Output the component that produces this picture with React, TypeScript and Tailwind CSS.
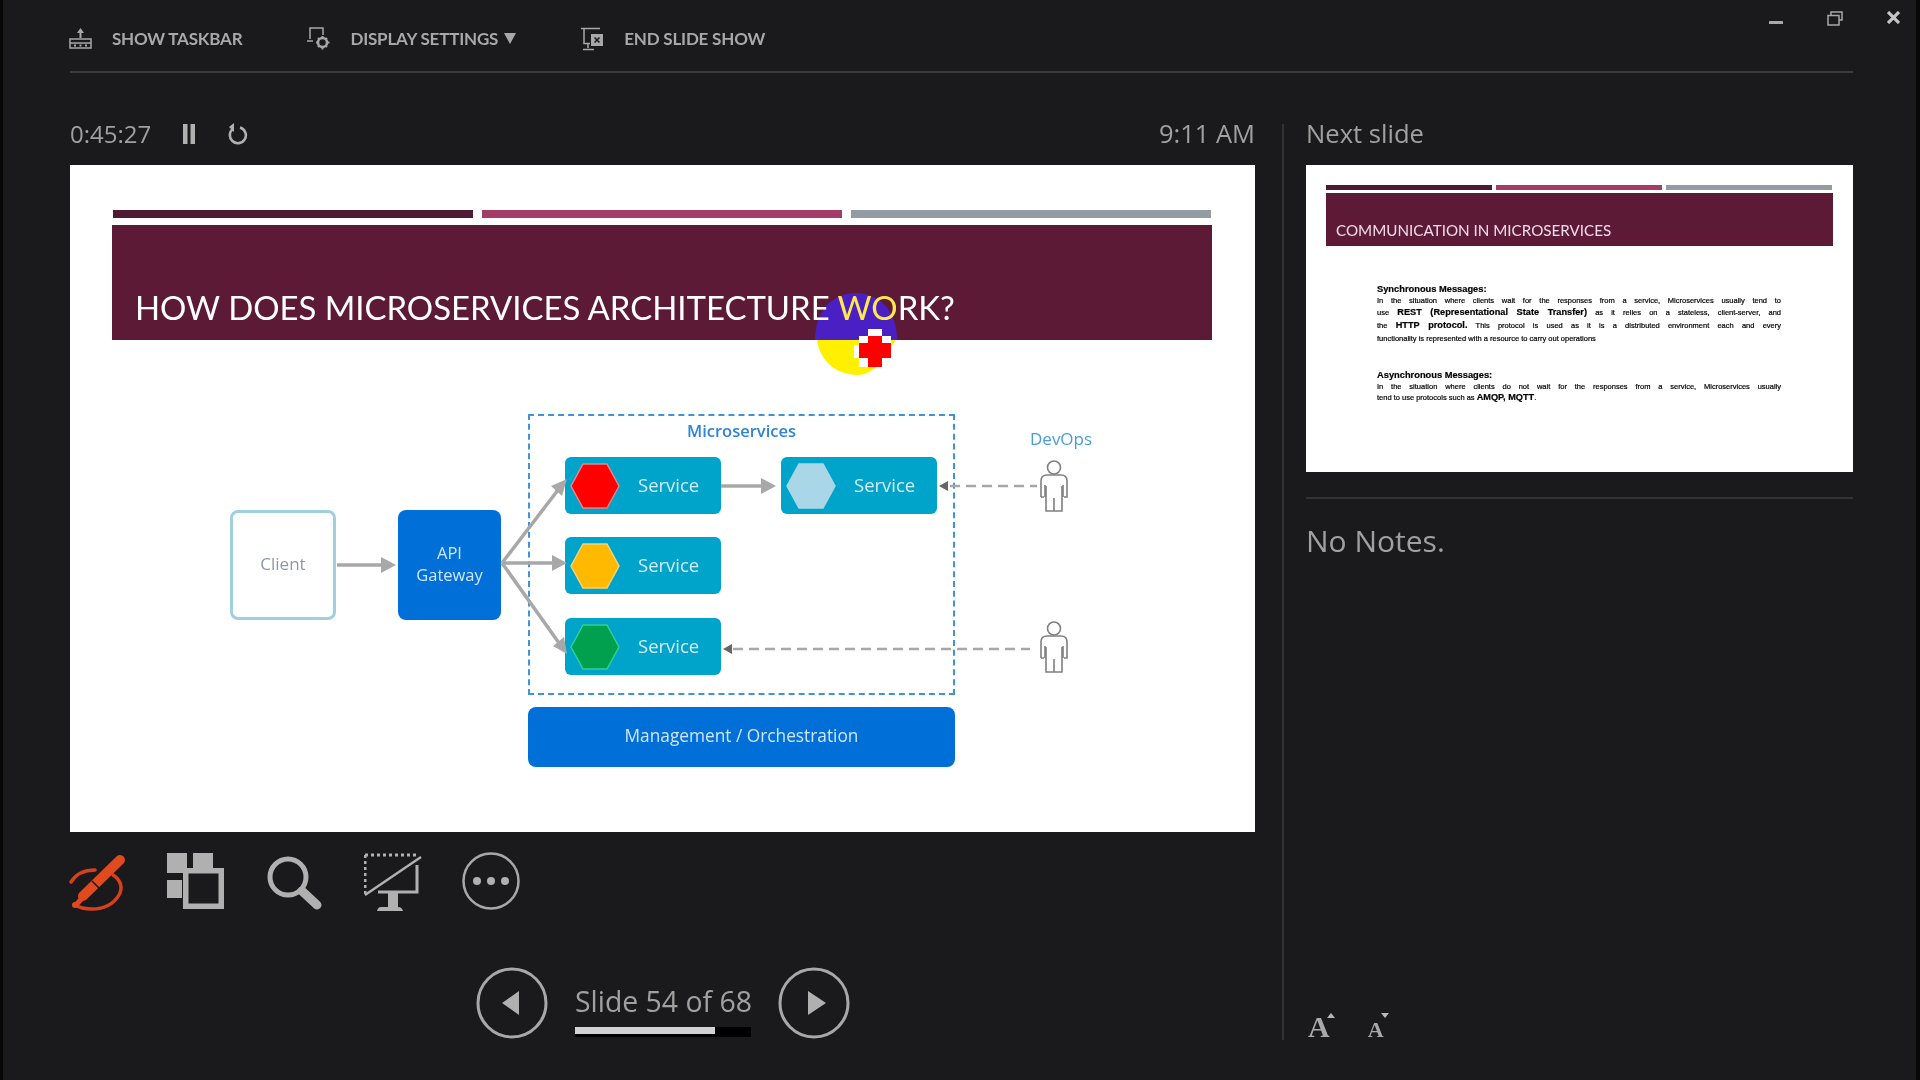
import React from "react";

const uiFont = "font-['Open_Sans','Liberation_Sans',sans-serif]";

const Hexagon = ({ fill, stroke }: { fill: string; stroke: string }) => (
	<svg width="50" height="46" viewBox="0 0 50 46" className="absolute left-[5px] top-[6px]">
		<polygon points="1,23 13,1 37,1 49,23 37,45 13,45" fill={fill} stroke={stroke} strokeWidth="1.5" />
	</svg>
);

const Person = ({ className }: { className: string }) => (
	<svg width="28" height="52" viewBox="0 0 28 52" fill="none" stroke="#808080" strokeWidth="1.6" className={className}>
		<circle cx="14" cy="7.5" r="6.5" fill="#fff" />
		<path d="M1 37V21q0-6 6-6h14q6 0 6 6v16h-3M1 37h3" />
		<path d="M5 25v12M23 25v12M6 37v14h16V37M14 38v13M6 26v11M22 26v11" />
	</svg>
);

const Service = ({ className, fill, stroke }: { className: string; fill: string; stroke: string }) => (
	<div className={`absolute w-[156px] h-[57px] rounded-[6px] bg-[#00a3c9] ${className}`}>
		<Hexagon fill={fill} stroke={stroke} />
		<span className="absolute left-[73px] top-[15px] text-[18.5px] leading-[26px] font-['Open_Sans',sans-serif] text-[#d3ecf4]">
			Service
		</span>
	</div>
);

const MainSlide = () => (
	<div className="relative w-[1185px] h-[667px] bg-white overflow-hidden">
		<div className="flex gap-[9px] pl-[43px] pr-[43px] pt-[45px]">
			<div className="w-[360px] h-[8px] bg-[#4e1a33]" />
			<div className="w-[360px] h-[8px] bg-[#a33d68]" />
			<div className="w-[360px] h-[8px] bg-[#949ca3]" />
		</div>
		<div className="mx-[42px] mt-[7px] w-[1100px] h-[115px] bg-[#5c1a36]" />

		{/* cursor highlight sits under the title text */}
		<svg width="90" height="90" viewBox="0 0 90 90" className="absolute left-[744px] top-[125px]">
			<path d="M1 50C1 22 18 3 42 3s41 19 41 47z" fill="#4a20c4" />
			<path d="M3 50C6 70 21 85 44 85C56 85 66 75 71 65L82 50z" fill="#ffef00" />
		</svg>
		<div className="absolute left-[65px] top-[120px] text-[32.9px] leading-[46px] whitespace-nowrap font-['Lato',sans-serif] text-white">
			HOW DOES MICROSERVICES ARCHITECTURE <span className="text-[#ffe94a]">WO</span>RK?
		</div>
		<svg width="38" height="40" viewBox="0 0 38 40" className="absolute left-[784px] top-[164px]" shapeRendering="crispEdges">
			<path d="M14 0h14v7h9v31H5V29H0V16h5V7h9z" fill="#fff" />
			<path d="M14 7h14v7h9v15h-9v9H14v-9H5V14h9z" fill="#ff0000" />
		</svg>

		{/* diagram */}
		<div className="absolute left-[160px] top-[345px] w-[106px] h-[110px] pb-[2px] rounded-[8px] border-[3px] border-[#9fd0e0] flex items-center justify-center text-[17px] font-['Open_Sans',sans-serif] text-[#8a9ba3]">
			Client
		</div>
		<div className="absolute left-[328px] top-[345px] w-[103px] h-[110px] pb-[2px] rounded-[8px] bg-[#0070d8] flex items-center justify-center text-center text-[16.5px] leading-[22px] font-['Open_Sans',sans-serif] text-[#cfe6fa]">
			API
			<br />
			Gateway
		</div>
		<div className="absolute left-[458px] top-[249px] w-[427px] h-[281px] border-2 border-dashed border-[#3f93d9]" />
		<div className="absolute left-[458px] top-[254px] w-[427px] text-center text-[16.5px] leading-[24px] font-semibold font-['Open_Sans',sans-serif] text-[#2f84d6]">
			Microservices
		</div>
		<Service className="left-[495px] top-[292px]" fill="#ff0000" stroke="#e8858a" />
		<Service className="left-[495px] top-[372px]" fill="#ffb900" stroke="#f3d27a" />
		<Service className="left-[495px] top-[453px]" fill="#00a04f" stroke="#2fcf9a" />
		<Service className="left-[711px] top-[292px]" fill="#a9d7e8" stroke="#a9d7e8" />
		<div className="absolute left-[458px] top-[542px] w-[427px] h-[60px] pb-[2px] rounded-[8px] bg-[#0070d8] flex items-center justify-center text-[17.3px] font-['Open_Sans',sans-serif] text-[#cfe6fa]">
			Management / Orchestration
		</div>
		<div className="absolute left-[960px] top-[262px] text-[17px] leading-[24px] font-['Open_Sans',sans-serif] text-[#4b9be0]">
			DevOps
		</div>
		<Person className="absolute left-[970px] top-[295px]" />
		<Person className="absolute left-[970px] top-[456px]" />

		<svg width="1185" height="667" viewBox="0 0 1185 667" fill="none" className="absolute left-0 top-0 pointer-events-none">
			<g stroke="#a8a8a8" strokeWidth="3.5">
				<path d="M267 400h46" />
				<path d="M651 321h44" />
				<path d="M432 398L488 325" />
				<path d="M432 398h54" />
				<path d="M432 398L489 478" />
			</g>
			<g fill="#a8a8a8">
				<polygon points="326,400 311,392 311,408" />
				<polygon points="706,321 691,313 691,329" />
				<polygon points="497,314 481,321 492,331" />
				<polygon points="497,398 482,390 482,406" />
				<polygon points="497,489 494,472 483,481" />
			</g>
			<g stroke="#aaa6a6" strokeWidth="2.5" strokeDasharray="10 6">
				<path d="M880 321h87" />
				<path d="M663 484h297" />
			</g>
			<g fill="#666">
				<polygon points="869,321 878,316 878,326" />
				<polygon points="653,484 662,479 662,489" />
			</g>
		</svg>
	</div>
);

const lineClass = "text-justify [text-align-last:justify] whitespace-nowrap";

const NextSlide = () => (
	<div className="w-[547px] h-[307px] bg-white pt-[20px] px-[20px]">
		<div className="flex gap-[4px]">
			<div className="w-[166px] h-[5px] bg-[#4e1a33]" />
			<div className="w-[166px] h-[5px] bg-[#a33d68]" />
			<div className="w-[166px] h-[5px] bg-[#949ca3]" />
		</div>
		<div className="mt-[3px] h-[53px] w-[507px] bg-[#5c1a36] pl-[10px] pt-[27px] text-[15.2px] leading-[21px] font-['Lato',sans-serif] text-[#f2dde6]">
			COMMUNICATION IN MICROSERVICES
		</div>
		<div className="ml-[51px] w-[404px] mt-[37px] text-[7.5px] text-black [-webkit-text-stroke:0.2px_black] blur-[0.3px] font-['Liberation_Sans',sans-serif]">
			<div className="font-bold text-[9.3px] leading-[12px]">Synchronous Messages:</div>
			<div className={`${lineClass} leading-[11px]`}>
				In the situation where clients wait for the responses from a service, Microservices usually tend to
			</div>
			<div className={`${lineClass} leading-[12px]`}>
				use <b className="text-[9.2px]">REST (Representational State Transfer)</b> as it relies on a stateless, client-server, and
			</div>
			<div className={`${lineClass} leading-[13px]`}>
				the <b className="text-[9.2px]">HTTP protocol.</b> This protocol is used as it is a distributed environment each and every
			</div>
			<div className="leading-[13px]">functionality is represented with a resource to carry out operations</div>
			<div className="font-bold text-[9.3px] leading-[12px] mt-[24px]">Asynchronous Messages:</div>
			<div className={`${lineClass} leading-[11px]`}>
				In the situation where clients do not wait for the responses from a service, Microservices usually
			</div>
			<div className="leading-[11px]">
				tend to use protocols such as <b className="text-[9.2px]">AMQP, MQTT</b>.
			</div>
		</div>
	</div>
);

const ToolbarItem = ({ icon, label, suffix }: { icon: React.ReactNode; label: string; suffix?: boolean }) => (
	<div className="flex items-center gap-[20px]">
		{icon}
		<span className="flex items-center text-[17px] font-bold tracking-[-0.2px] font-['Lato',sans-serif] text-[#a8a8a8]">
			{label}
			{suffix && (
				<span className="ml-[6px] w-0 h-0 border-x-[6.5px] border-x-transparent border-t-[11px] border-t-[#a8a8a8]" />
			)}
		</span>
	</div>
);

const TaskbarIcon = (
	<svg width="23" height="22" viewBox="0 0 23 22" fill="none" stroke="#a8a8a8" strokeWidth="1.5">
		<rect x="1" y="11" width="21" height="9" />
		<path d="M1 15h21" />
		<path d="M11.5 10V4" strokeWidth="2" />
		<polygon points="11.5,0 8,5 15,5" fill="#a8a8a8" stroke="none" />
		<path d="M5 17.5h2M10.5 17.5h2M16 17.5h2" strokeWidth="2" />
	</svg>
);

const DisplayIcon = (
	<svg width="23" height="23" viewBox="0 0 23 23" fill="none" stroke="#a8a8a8" strokeWidth="1.5">
		<path d="M3 12V1h13v7M0 14h6" />
		<circle cx="15.5" cy="15.5" r="4.5" strokeWidth="2.5" />
		<path d="M15.5 9v2M15.5 20v2.5M9 15.5h2M20 15.5h2.5M11 11l1.5 1.5M18.5 18.5l1.5 1.5M20 11l-1.5 1.5M12.5 18.5L11 20" strokeWidth="2" />
	</svg>
);

const EndShowIcon = (
	<svg width="23" height="24" viewBox="0 0 23 24" fill="none" stroke="#a8a8a8" strokeWidth="1.5">
		<path d="M0 1.5h19M3 1.5v15h6M7 16v5M2 22.5h11" />
		<rect x="10" y="7" width="12" height="12" fill="#a8a8a8" stroke="none" />
		<path d="M13.5 10.5l5 5M18.5 10.5l-5 5" stroke="#1a1a1c" strokeWidth="1.6" />
	</svg>
);

const Header = () => (
	<div className="flex h-[71px]">
		<div className="ml-[69px] flex items-center gap-[65px] pt-[6px]">
			<ToolbarItem icon={TaskbarIcon} label="SHOW TASKBAR" />
			<ToolbarItem icon={DisplayIcon} label="DISPLAY SETTINGS" suffix />
			<ToolbarItem icon={EndShowIcon} label="END SLIDE SHOW" />
		</div>
		<div className="ml-auto mr-[20px] mt-[11px] flex items-start gap-[44px]">
			<div className="mt-[10px] w-[14px] h-[2.5px] bg-[#a8a8a8]" />
			<svg width="16" height="15" viewBox="0 0 16 15" fill="none" stroke="#a8a8a8" strokeWidth="1.5">
				<rect x="1" y="4.5" width="11" height="9.5" />
				<path d="M4 4V1h11v8h-3" />
			</svg>
			<svg width="13" height="13" viewBox="0 0 13 13" stroke="#c4c4c4" strokeWidth="3.2">
				<path d="M1 1l11 11M12 1L1 12" />
			</svg>
		</div>
	</div>
);

const PenIcon = (
	<svg width="58" height="60" viewBox="0 0 58 60" fill="none" className="overflow-visible">
		<path d="M1 30C6 22 14 18 25 18" stroke="#d8401c" strokeWidth="3.5" strokeLinecap="round" />
		<path d="M43 23c8 5 10 13 6 20-6 10-16 14-27 14-6 0-12-1-17-4" stroke="#d8401c" strokeWidth="3.5" strokeLinecap="round" />
		<path d="M13 44L50 8" stroke="#e04a1e" strokeWidth="10" strokeLinecap="round" />
		<path d="M6 53L14 44" stroke="#e04a1e" strokeWidth="5" />
		<circle cx="5" cy="53" r="3" fill="#e04a1e" />
		<path d="M22 29l8 8" stroke="#1a1a1c" strokeWidth="1.6" />
	</svg>
);

const SlidesIcon = (
	<svg width="58" height="60" viewBox="0 0 58 60" fill="none" className="overflow-visible">
		<rect x="-1" y="1" width="20" height="20" fill="#b0b0b0" />
		<rect x="25" y="1" width="20" height="15" fill="#b0b0b0" />
		<rect x="-1" y="28" width="15" height="18" fill="#b0b0b0" />
		<rect x="17.75" y="18.75" width="35.5" height="35.5" fill="#1a1a1c" stroke="#b0b0b0" strokeWidth="5.5" />
	</svg>
);

const SearchIcon = (
	<svg width="58" height="60" viewBox="0 0 58 60" fill="none" stroke="#b0b0b0">
		<circle cx="22" cy="25" r="18" strokeWidth="5" />
		<path d="M36 39l15 14" strokeWidth="9" strokeLinecap="round" />
	</svg>
);

const ScreenOffIcon = (
	<svg width="58" height="60" viewBox="0 0 58 60" fill="none">
		<path d="M1 3h53M1 3v39" stroke="#b0b0b0" strokeWidth="3" strokeDasharray="3 3" />
		<path d="M1 43L57 5" stroke="#b0b0b0" strokeWidth="2.5" />
		<path d="M53 13v27H14" stroke="#b0b0b0" strokeWidth="3" />
		<rect x="24" y="40" width="10" height="15" fill="#b0b0b0" />
		<path d="M13 59q1-4 4-4h17q4 0 5 4z" fill="#b0b0b0" />
	</svg>
);

const MoreIcon = (
	<svg width="58" height="60" viewBox="0 0 58 60" fill="none">
		<circle cx="29" cy="29" r="27.5" stroke="#a8a8a8" strokeWidth="2.5" />
		<circle cx="15" cy="29" r="4" fill="#b0b0b0" />
		<circle cx="29" cy="29" r="4" fill="#b0b0b0" />
		<circle cx="43" cy="29" r="4" fill="#b0b0b0" />
	</svg>
);

const NavButton = ({ points, className }: { points: string; className?: string }) => (
	<svg width="72" height="72" viewBox="0 0 72 72" fill="none" className={className}>
		<circle cx="36" cy="36" r="34" stroke="#a8a8a8" strokeWidth="3" />
		<polygon points={points} fill="#b0b0b0" />
	</svg>
);

const App = () => {
	return (
		<div
			className={`w-[1920px] h-[1080px] bg-[#1a1a1c] overflow-hidden blur-[0.5px] shadow-[inset_3px_0_0_#070707,inset_-4px_0_0_#070707] ${uiFont}`}
		>
			<Header />
			<div className="ml-[70px] mr-[67px] h-[2px] bg-[#3c3c3e]" />
			<div className="flex pl-[70px] pt-[30px]">
				<div className="w-[1185px]">
					<div className="flex items-center h-[62px] pb-[1px] text-[#a0a0a0]">
						<span className="text-[24px] w-[113px]">0:45:27</span>
						<svg width="12" height="20" viewBox="0 0 12 20" fill="#b0b0b0">
							<rect x="0" y="0" width="4.5" height="20" />
							<rect x="7.5" y="0" width="4.5" height="20" />
						</svg>
						<svg width="20" height="22" viewBox="0 0 20 22" fill="none" stroke="#b0b0b0" strokeWidth="2.6" className="ml-[33px]">
							<path d="M12 4.5a8 8 0 1 1-6.5 1" />
							<polygon points="6,0 6,9 1,4" fill="#b0b0b0" stroke="none" />
						</svg>
						<span className="ml-auto text-[25.5px]">9:11 AM</span>
					</div>
					<MainSlide />
					<div className="flex gap-[40px] mt-[20px]">
						{PenIcon}
						{SlidesIcon}
						{SearchIcon}
						{ScreenOffIcon}
						{MoreIcon}
					</div>
					<div className="flex items-start mt-[55px] ml-[406px]">
						<NavButton points="43,24 43,48 26,36" />
						<div className="ml-[27px] w-[176px] pt-[14px]">
							<div className="text-[28.4px] leading-[40px] text-[#a0a0a0] whitespace-nowrap">Slide 54 of 68</div>
							<div className="h-[10px] mt-[6px] bg-black">
								<div className="w-[140px] h-[7px] bg-[#d2d2d2]" />
							</div>
						</div>
						<NavButton points="30,24 30,48 48,36" className="ml-[27px]" />
					</div>
				</div>
				<div className="ml-[27px] mt-[21px] w-[2px] h-[916px] bg-[#333335]" />
				<div className="ml-[22px] w-[547px] flex flex-col">
					<div className="h-[62px] pt-[1px] flex items-center text-[25.6px] text-[#a0a0a0]">Next slide</div>
					<NextSlide />
					<div className="mt-[25px] h-[2px] bg-[#333335]" />
					<div className="mt-[20px] text-[30px] leading-[44px] text-[#a0a0a0]">No Notes.</div>
					<div className="mt-[449px] ml-[2px] flex items-end gap-[38px] font-['Liberation_Serif',serif] font-bold text-[#a8a8a8]">
						<span className="relative text-[30px] leading-[30px]">
							A
							<span className="absolute left-[19px] top-[1px] w-0 h-0 border-x-[4px] border-x-transparent border-b-[5px] border-b-[#b8b8b8]" />
						</span>
						<span className="relative text-[22px] leading-[24px]">
							A
							<span className="absolute left-[13px] top-[-5px] w-0 h-0 border-x-[4px] border-x-transparent border-t-[5px] border-t-[#b8b8b8]" />
						</span>
					</div>
				</div>
			</div>
		</div>
	);
};

export default App;
